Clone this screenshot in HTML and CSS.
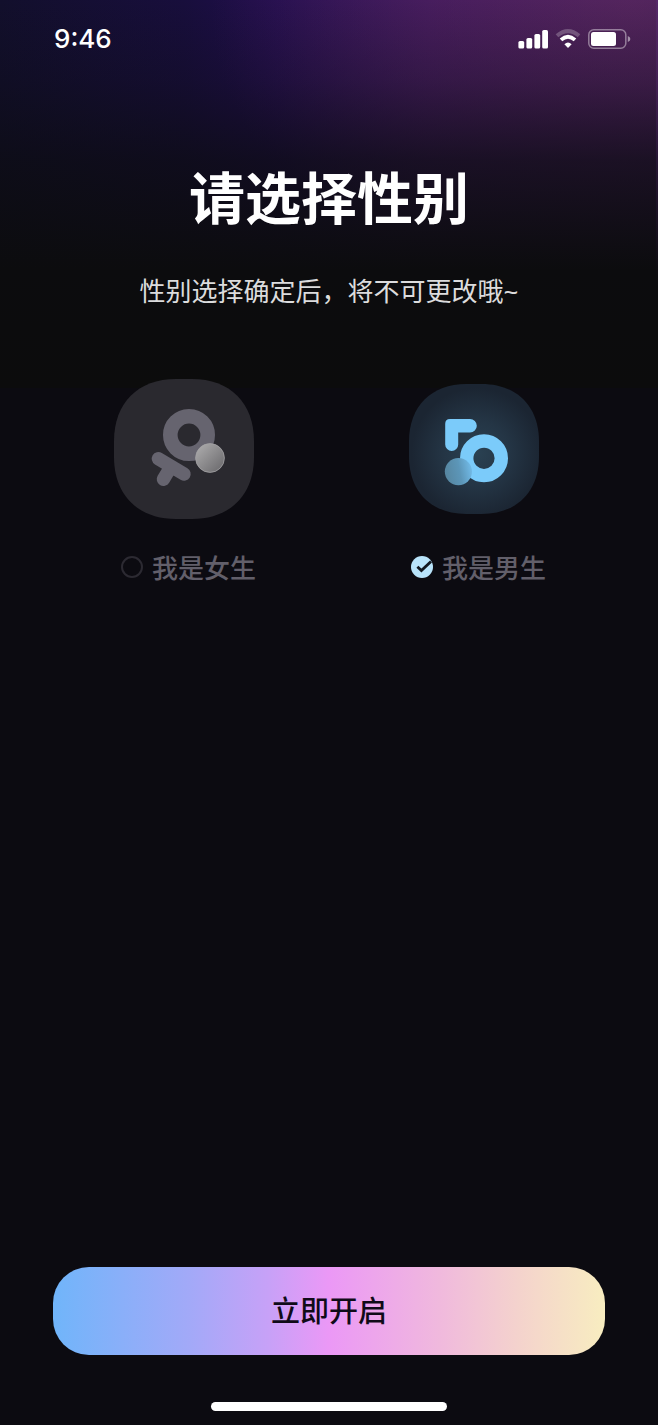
FILE: index.html
```html
<!DOCTYPE html>
<html lang="zh-CN">
<head>
<meta charset="utf-8">
<meta name="viewport" content="width=device-width, initial-scale=1">
<title>请选择性别</title>
<link rel="stylesheet" href="styles.css">
</head>
<body>
<div class="screen">
  <header class="status-bar">
    <time class="status-time">9:46</time>
    <div class="status-icons">
      <svg width="30" height="20" viewBox="0 0 30 20" fill="#fff" aria-hidden="true">
        <rect x="0.4" y="12" width="5.8" height="7.5" rx="1.6"/>
        <rect x="8.4" y="9" width="5.8" height="10.5" rx="1.6"/>
        <rect x="16.4" y="5" width="5.8" height="14.5" rx="1.6"/>
        <rect x="24.2" y="1" width="5.8" height="18.5" rx="1.6"/>
      </svg>
      <svg width="26" height="20" viewBox="0 0 26 20" fill="none" aria-hidden="true">
        <path d="M2 6.8Q13-2.6 24 6.8" stroke="#fff" stroke-opacity=".24" stroke-width="4"/>
        <path d="M6 10.8Q13 4.6 20 10.8" stroke="#fff" stroke-width="3.8"/>
        <path d="M9.4 15.2Q13 12 16.6 15.2L13 19Z" fill="#fff"/>
      </svg>
      <svg width="43" height="20" viewBox="0 0 43 20" aria-hidden="true">
        <rect x="0.8" y="0.8" width="37" height="18.4" rx="5" fill="none" stroke="#fff" stroke-opacity=".42" stroke-width="1.5"/>
        <rect x="3" y="3" width="25" height="14" rx="2.5" fill="#fff"/>
        <path d="M39.8 7Q42.4 8 42.4 10T39.8 13Z" fill="#fff" fill-opacity=".5"/>
      </svg>
    </div>
  </header>

  <form class="page">
    <h1 class="title">请选择性别</h1>
    <p class="subtitle" id="hint">性别选择确定后，将不可更改哦~</p>

    <fieldset class="options" aria-describedby="hint" aria-label="性别">
      <label class="option" for="female">
        <span class="tile">
          <svg width="140" height="140" viewBox="0 0 140 140" aria-hidden="true">
            <defs>
              <linearGradient id="pearl" x1="0.1" y1="0.1" x2="0.9" y2="0.9">
                <stop offset="0" stop-color="#a9a8a9"/>
                <stop offset="1" stop-color="#6e6d70"/>
              </linearGradient>
            </defs>
            <path d="M0 62C0 24 24 0 62 0H78C116 0 140 24 140 62V78C140 116 116 140 78 140H62C24 140 0 116 0 78Z" fill="#2a292f"/>
            <g fill="none" stroke="#66646f" stroke-linecap="round">
              <circle cx="75" cy="56" r="18.7" stroke-width="14.6"/>
              <path d="M44.4 79.7L70 95M57 87.6L49.4 100.2" stroke-width="13.4"/>
            </g>
            <circle cx="96" cy="79" r="14.4" fill="url(#pearl)" stroke="#a3a2a4" stroke-width=".8"/>
          </svg>
        </span>
        <span class="choice">
          <span class="radio"><input class="radio-input" type="radio" id="female" name="gender" value="female"></span>
          <span>我是女生</span>
        </span>
      </label>

      <label class="option" for="male">
        <span class="tile">
          <svg width="130" height="130" viewBox="0 0 140 140" aria-hidden="true">
            <defs>
              <radialGradient id="glow" cx="0.52" cy="0.53" r="0.5">
                <stop offset="0" stop-color="#2a4152"/>
                <stop offset="0.5" stop-color="#243545"/>
                <stop offset="1" stop-color="#1b2532"/>
              </radialGradient>
              <linearGradient id="drop" x1="0" y1="0.6" x2="1" y2="0.4">
                <stop offset="0" stop-color="#56859f"/>
                <stop offset="0.55" stop-color="#5c96b8"/>
                <stop offset="1" stop-color="#72bbe8"/>
              </linearGradient>
            </defs>
            <path d="M0 62C0 24 24 0 62 0H78C116 0 140 24 140 62V78C140 116 116 140 78 140H62C24 140 0 116 0 78Z" fill="url(#glow)"/>
            <g transform="scale(1.077)">
              <path d="M41 35H61A6.7 6.7 0 0 1 61 48.6H49.2V60.5A6.5 6.5 0 0 1 36.2 60.5V40Q36.2 35 41 35Z" fill="#7bcbfa"/>
              <circle cx="75" cy="74.3" r="17.3" fill="none" stroke="#7bcbfa" stroke-width="13.4"/>
              <circle cx="49.4" cy="87.6" r="13.6" fill="url(#drop)"/>
            </g>
          </svg>
        </span>
        <span class="choice">
          <span class="radio">
            <input class="radio-input" type="radio" id="male" name="gender" value="male" checked>
            <svg class="radio-tick" viewBox="0 0 22 22" aria-hidden="true"><path d="M6.4 10.8L10.4 14.6L20 5.4" fill="none" stroke="#111720" stroke-width="2.8"/></svg>
          </span>
          <span>我是男生</span>
        </span>
      </label>
    </fieldset>

    <button class="start" type="submit">立即开启</button>
  </form>
  <div class="home-indicator"></div>
</div>
</body>
</html>
```
FILE: styles.css
```css
* {
  box-sizing: border-box;
}

body {
  margin: 0;
  background: #0c0b11;
  color: #fff;
  font-family: "Noto Sans CJK SC", sans-serif;
}

.screen {
  display: flex;
  flex-direction: column;
  min-height: 100vh;
  padding-bottom: 14px;
  background:
    linear-gradient(rgba(90, 45, 120, 0.4), rgba(90, 45, 120, 0)) right top / 2px 290px no-repeat,
    linear-gradient(rgba(12, 12, 12, 0) 0, rgba(12, 12, 18, 0.3) 80px, rgba(12, 12, 18, 0.75) 160px, #0c0c0e 270px, #0c0c0c 388px) left top / 100% 388px no-repeat,
    radial-gradient(ellipse 420px 300px at 96% 10px, rgba(92, 40, 96, 0.75) 0, rgba(88, 36, 96, 0.55) 40%, rgba(80, 25, 90, 0) 100%) left top / 100% 388px no-repeat,
    linear-gradient(90deg, #120f2c 0, #180e3c 28%, #210e4e 42%, #38175c 65%, #3c1c56 100%) left top / 100% 388px no-repeat,
    #0c0b11;
}

.status-bar {
  display: flex;
  align-items: center;
  justify-content: space-between;
  height: 78px;
  padding: 0 27px 0 54px;
}

.status-time {
  font: 500 26px/32px Inter, sans-serif;
}

.status-icons {
  display: flex;
  gap: 7px;
}

.page {
  display: flex;
  flex: 1;
  flex-direction: column;
}

.title {
  margin: 75px 0 0;
  font-size: 56px;
  font-weight: 700;
  line-height: 84px;
  text-align: center;
}

.subtitle {
  margin: 34px 0 0;
  color: #dcdcdd;
  font-family: "Noto Sans", "Noto Sans CJK SC", sans-serif;
  font-size: 26px;
  line-height: 40px;
  text-align: center;
}

.options {
  display: grid;
  grid-template-columns: repeat(2, minmax(0, 290px));
  justify-content: center;
  margin: 68px 0 0;
  padding: 0;
  border: 0;
}

.option {
  display: flex;
  flex-direction: column;
  align-items: center;
  gap: 28px;
  cursor: pointer;
}

.tile {
  display: flex;
  align-items: center;
  justify-content: center;
  height: 140px;
}

.choice {
  display: flex;
  align-items: center;
  gap: 9px;
  padding-left: 9px;
  color: #625f6a;
  font-size: 26px;
  font-weight: 500;
  line-height: 40px;
}

.radio {
  display: flex;
  position: relative;
}

.radio-input {
  width: 22px;
  height: 22px;
  margin: 0;
  border: 2px solid #2c2a32;
  border-radius: 50%;
  appearance: none;
}

.radio-input:checked {
  border: 0;
  background: #b8e3fa;
}

.radio-tick {
  position: absolute;
  inset: 0;
  pointer-events: none;
}

.start {
  height: 88px;
  margin: auto 53px 47px;
  padding: 0 0 4px;
  border: 0;
  border-radius: 36px;
  background: linear-gradient(90deg, #70b5fa 0, #a3a9f8 25%, #c7a1f7 39%, #eb98f6 50%, #f0b9dd 70%, #f4d2cd 84%, #f8edc0 100%);
  color: #100b18;
  font: 500 29px/44px "Noto Sans CJK SC", sans-serif;
  cursor: pointer;
}

.home-indicator {
  align-self: center;
  width: 236px;
  height: 9px;
  border-radius: 5px;
  background: #fff;
}
```
